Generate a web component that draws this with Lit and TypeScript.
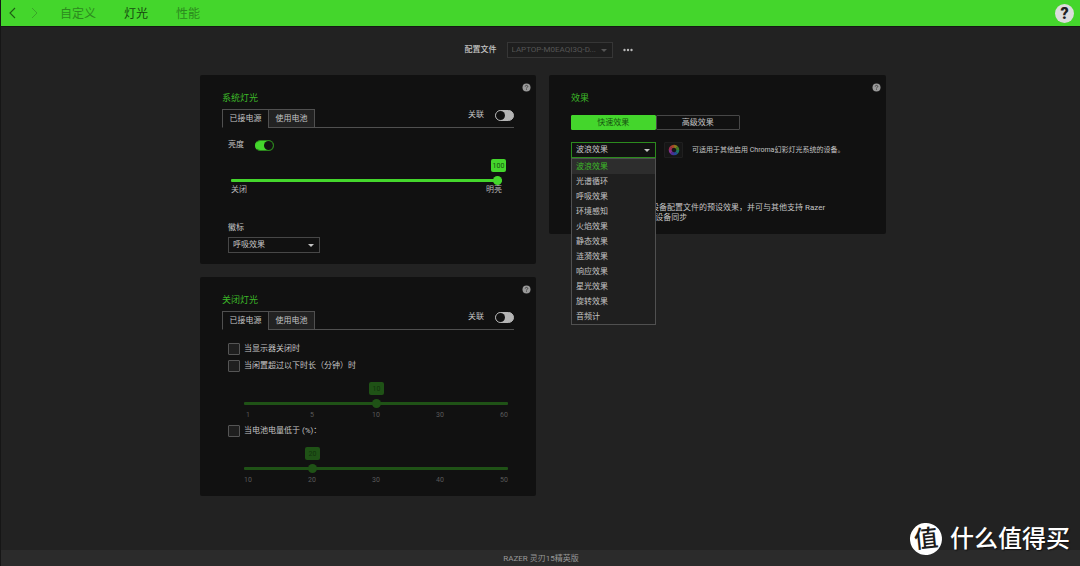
import { LitElement, html, css, svg } from "lit";
import { customElement, property, state } from "lit/decorators.js";
import { classMap } from "lit/directives/class-map.js";
import { styleMap } from "lit/directives/style-map.js";

const shared = css`
  *,
  *::before,
  *::after {
    box-sizing: border-box;
  }
  button,
  select,
  input {
    font: inherit;
    color: inherit;
    margin: 0;
    padding: 0;
    border: 0;
    border-radius: 0;
    background: none;
    letter-spacing: inherit;
  }
`;

@customElement("toggle-switch")
class ToggleSwitch extends LitElement {
  @property() label = "";
  @property({ type: Boolean }) on = false;

  static styles = [
    shared,
    css`
      :host {
        display: block;
      }
      .row {
        display: flex;
        align-items: center;
        gap: 11px;
        height: 12px;
        line-height: 12px;
      }
      .switch {
        appearance: none;
        display: flex;
        width: 19px;
        height: 11px;
        border-radius: 6px;
        background: #b5b5b5;
        border: 1px solid #b5b5b5;
      }
      .switch::before {
        content: "";
        width: 9px;
        height: 9px;
        border-radius: 50%;
        background: #111;
      }
      .switch:checked {
        background: #44d62c;
        border-color: #2b851d;
        border-left-color: #44d62c;
        justify-content: flex-end;
      }
    `,
  ];

  render() {
    return html`<label class="row">
      <span>${this.label}</span>
      <input
        class="switch"
        type="checkbox"
        role="switch"
        .checked=${this.on}
        @change=${(e: Event) => (this.on = (e.target as HTMLInputElement).checked)}
      />
    </label>`;
  }
}

@customElement("value-slider")
class ValueSlider extends LitElement {
  @property() label = "";
  @property({ type: Number }) max = 100;
  @property({ type: Number }) value = 0;
  @property({ attribute: false }) ticks: string[] = [];
  @property({ attribute: false }) ends: string[] = [];
  @property({ type: Boolean }) disabled = false;

  static styles = [
    shared,
    css`
      :host {
        display: block;
      }
      .slider {
        position: relative;
        padding-top: 17px;
        color: #44d62c;
      }
      .disabled {
        color: #1f5216;
      }
      .rail {
        position: absolute;
        top: 0;
        left: 4px;
        right: 4px;
      }
      .bubble {
        position: absolute;
        top: 0;
        width: 15px;
        margin-left: -7px;
        height: 13px;
        border-radius: 2px;
        background: currentColor;
        text-align: center;
        font-size: 7px;
        line-height: 14px;
      }
      .number {
        color: #175210;
      }
      .disabled .number {
        color: #12330d;
      }
      .range {
        appearance: none;
        display: block;
        width: 100%;
        height: 9px;
      }
      .range::-webkit-slider-runnable-track {
        height: 3px;
        border-radius: 1px;
        background: currentColor;
      }
      .range::-webkit-slider-thumb {
        appearance: none;
        width: 9px;
        height: 9px;
        margin-top: -3px;
        border-radius: 50%;
        background: currentColor;
      }
      .ends,
      .ticks {
        display: flex;
        justify-content: space-between;
        height: 9px;
        line-height: 9px;
        color: #b8b8b8;
      }
      .ticks {
        margin-top: 3px;
        font-size: 7px;
        color: #5a5a5a;
      }
      .tick {
        width: 8px;
        text-align: center;
      }
    `,
  ];

  render() {
    const shown = this.ticks.length ? this.ticks[this.value] : String(this.value);
    return html`<div class=${classMap({ slider: true, disabled: this.disabled })}>
      <div class="rail">
        <output class="bubble" style=${styleMap({ left: `${(this.value / this.max) * 100}%` })}
          ><span class="number">${shown}</span></output
        >
      </div>
      <input
        class="range"
        type="range"
        min="0"
        aria-label=${this.label}
        max=${this.max}
        .value=${String(this.value)}
        ?disabled=${this.disabled}
        @input=${(e: Event) => (this.value = Number((e.target as HTMLInputElement).value))}
      />
      ${this.ends.length
        ? html`<div class="ends">${this.ends.map((t) => html`<span>${t}</span>`)}</div>`
        : html`<div class="ticks">${this.ticks.map((t) => html`<span class="tick">${t}</span>`)}</div>`}
    </div>`;
  }
}

@customElement("power-tabs")
class PowerTabs extends LitElement {
  @state() active = 0;

  static styles = [
    shared,
    css`
      :host {
        display: block;
      }
      .bar {
        display: flex;
        height: 19px;
        margin: 0 22px;
      }
      .tab {
        width: 46px;
        padding-top: 1px;
        border: 1px solid #505050;
        border-right: 0;
        background: #222;
        color: #c4c4c4;
        white-space: nowrap;
      }
      .tab:nth-child(2) {
        width: 47px;
        border-right: 1px solid #505050;
      }
      .active {
        background: #111;
        border-bottom-color: #111;
      }
      .rest {
        flex: 1;
        display: flex;
        justify-content: flex-end;
        border-bottom: 1px solid #505050;
      }
    `,
  ];

  render() {
    return html`<div class="bar" role="tablist">
      ${["已接电源", "使用电池"].map(
        (t, i) =>
          html`<button
            role="tab"
            aria-selected=${i === this.active}
            class=${classMap({ tab: true, active: i === this.active })}
            @click=${() => (this.active = i)}
          >${t}</button>`
      )}
      <div class="rest"><toggle-switch label="关联"></toggle-switch></div>
    </div>`;
  }
}

const EFFECTS = [
  "波浪效果",
  "光谱循环",
  "呼吸效果",
  "环境感知",
  "火焰效果",
  "静态效果",
  "涟漪效果",
  "响应效果",
  "星光效果",
  "旋转效果",
  "音频计",
];

const WHEEL = ["#8a7a1e", "#3f7a28", "#1f7560", "#234a94", "#4a2f96", "#86308a", "#a02c50", "#a8452a"];

@customElement("app-root")
class AppRoot extends LitElement {
  @state() effect = 0;
  @state() mode = 0;

  static styles = [
    shared,
    css`
      :host {
        display: block;
      }
      .app {
        position: relative;
        display: flex;
        flex-direction: column;
        min-height: 100vh;
        border-left: 1px solid #161616;
        background: #222;
        color: #c4c4c4;
        font-family: Roboto, "Noto Sans CJK SC", sans-serif;
        font-size: 8px;
        line-height: 10px;
      }
      .top {
        display: flex;
        align-items: center;
        height: 27px;
        padding: 0 6px 0 8px;
        background: #44d62c;
        border-bottom: 1px solid #151a14;
      }
      .arrows {
        display: flex;
        gap: 15px;
      }
      .arrow {
        display: block;
        width: 7px;
        height: 12px;
        color: #1d5c14;
      }
      .arrow:disabled {
        color: #3aa528;
      }
      .arrow svg,
      .help svg,
      .more svg {
        display: block;
        width: 100%;
        height: 100%;
      }
      .nav {
        flex: 1;
        display: flex;
        gap: 28px;
        margin-left: 22px;
        padding-top: 2px;
        font-size: 12px;
        line-height: 24px;
      }
      .link {
        color: #2c8a1e;
        text-decoration: none;
      }
      .current {
        color: #174a10;
      }
      .about {
        width: 19px;
        height: 19px;
        border-radius: 50%;
        background: #ddd;
        color: #222;
        font-size: 16px;
        font-weight: 900;
        line-height: 19px;
      }
      .main {
        flex: 1;
        padding: 15px 0 15px 5px;
      }
      .profile {
        display: flex;
        justify-content: center;
        align-items: center;
        gap: 10px;
        margin-bottom: 17px;
        padding-left: 11px;
      }
      .profile-label {
        font-weight: 500;
      }
      .more {
        width: 10px;
        height: 8px;
      }
      .select {
        position: relative;
        height: 16px;
      }
      .select::after {
        content: "";
        position: absolute;
        right: 6px;
        top: 7px;
        border: 3px solid transparent;
        border-top-color: currentColor;
        border-bottom: 0;
        pointer-events: none;
      }
      .box {
        appearance: none;
        display: block;
        width: 100%;
        height: 16px;
        padding: 0 14px 0 4px;
        border: 1px solid #474747;
        background: #111;
        color: inherit;
        opacity: 1;
      }
      .device {
        width: 106px;
        color: #555;
      }
      .device .box {
        background: #1e1e1e;
        border-color: #363636;
      }
      .logo {
        width: 92px;
      }
      .effect {
        width: 85px;
      }
      .effect .box {
        border-color: #2c8a1e;
      }
      .columns {
        display: grid;
        grid-template-columns: 336fr 337fr;
        gap: 13px;
        align-items: start;
        max-width: 686px;
        margin: 0 auto;
      }
      .stack {
        display: grid;
        gap: 13px;
      }
      .panel {
        padding-bottom: 11px;
        border-radius: 2px;
        background: #111;
      }
      .head {
        display: flex;
        justify-content: space-between;
        align-items: flex-start;
        height: 34px;
        padding: 8px 5px 0 22px;
      }
      .head.tall {
        height: 40px;
      }
      .title {
        margin: 0;
        padding-top: 9px;
        color: #3cb828;
        font-size: 9px;
        font-weight: 400;
        line-height: 12px;
      }
      .help {
        width: 9px;
        height: 9px;
      }
      .body {
        padding: 0 28px;
      }
      .bright {
        margin: 11px 0 8px;
      }
      .brightness {
        margin: 0 6px 0 3px;
      }
      .logo-label {
        display: block;
        margin: 29px 0 4px;
      }
      .checks {
        display: grid;
        gap: 5px;
        margin-top: 13px;
      }
      .checks + .scale {
        margin-bottom: 5px;
      }
      .check {
        display: flex;
        align-items: center;
        gap: 4px;
        height: 12px;
      }
      .tick-box {
        appearance: none;
        width: 12px;
        height: 12px;
        border: 1px solid #555;
        border-radius: 1px;
        background: #1f1f1f;
      }
      .tick-box:checked {
        background: #44d62c;
      }
      .scale {
        margin: 10px 0 0 16px;
      }
      .quick {
        padding: 0 22px;
      }
      .segments {
        display: flex;
        width: 169px;
        height: 15px;
      }
      .segment {
        flex: 1;
        border: 1px solid #474747;
        border-radius: 1px;
      }
      .chosen {
        background: #44d62c;
        border-color: #44d62c;
        color: #175210;
      }
      .choice {
        display: flex;
        align-items: center;
        margin: 12px 0 45px;
      }
      .chroma {
        display: grid;
        place-items: center;
        width: 19px;
        height: 16px;
        margin: 0 9px 0 8px;
        border: 1px solid #1f1f1f;
        border-radius: 1px;
        background: #161616;
      }
      .note {
        font-size: 7px;
      }
      .menu {
        position: absolute;
        z-index: 1;
        top: 16px;
        left: 0;
        right: 0;
        margin: 0;
        padding: 0;
        list-style: none;
        border: 1px solid #505050;
        background: #1f1f1f;
        color: #c4c4c4;
      }
      .item {
        padding-left: 4px;
        line-height: 15px;
      }
      .picked {
        background: #2d2d2d;
        color: #3cb828;
      }
      .about-effect {
        max-width: 264px;
        margin: 0;
      }
      .foot {
        height: 16px;
        padding-left: 1px;
        background: #2b2b2b;
        color: #999;
        line-height: 17px;
        text-align: center;
      }
      .mark {
        position: absolute;
        right: 10px;
        bottom: 10px;
        display: flex;
        align-items: center;
        gap: 8px;
        color: #fff;
        font-size: 24px;
        font-weight: 500;
        line-height: 34px;
        text-shadow: 1px 1px 1px #111;
      }
      .seal {
        width: 32px;
        height: 32px;
        border-radius: 50%;
        background: #fff;
        color: #1c1c1c;
        line-height: 32px;
        text-align: center;
        text-shadow: none;
        transform: rotate(-6deg);
      }
    `,
  ];

  help() {
    return html`<button class="help" aria-label="帮助">
      <svg viewBox="0 0 9 9">
        <circle cx="4.5" cy="4.5" r="4" fill="#999" />
        <path d="M3.2 3.6Q3.3 2.4 4.5 2.4T5.8 3.5Q5.8 4.2 4.5 4.9V5.4M4.5 6.1V6.8" fill="none" stroke="#333" stroke-width=".8" />
      </svg>
    </button>`;
  }

  wheel() {
    return html`<svg width="12" height="12" viewBox="-6 -6 12 12">
      ${WHEEL.map(
        (c, i) =>
          svg`<path d="M0-3.8A3.8 3.8 0 0 1 2.8-2.6" fill="none" stroke=${c} stroke-width="3" transform="rotate(${i * 45})" />`
      )}
    </svg>`;
  }

  check(text: string) {
    return html`<label class="check"><input class="tick-box" type="checkbox" /><span>${text}</span></label>`;
  }

  render() {
    return html`<div class="app">
      <header class="top">
        <div class="arrows">
          <button class="arrow" aria-label="后退">
            <svg viewBox="0 0 7 12"><path d="M6 1L1 6L6 11" fill="none" stroke="currentColor" stroke-width="1.1" /></svg>
          </button>
          <button class="arrow" aria-label="前进" disabled>
            <svg viewBox="0 0 7 12"><path d="M1 1L6 6L1 11" fill="none" stroke="currentColor" stroke-width="1" /></svg>
          </button>
        </div>
        <nav class="nav">
          <a class="link" href="#custom">自定义</a>
          <a class="link current" href="#lighting" aria-current="page">灯光</a>
          <a class="link" href="#performance">性能</a>
        </nav>
        <button class="about" aria-label="帮助">?</button>
      </header>

      <main class="main">
        <div class="profile">
          <label class="profile-label" for="profile">配置文件</label>
          <div class="select device">
            <select class="box" id="profile" disabled>
              <option>LAPTOP-M0EAQI3Q-D...</option>
            </select>
          </div>
          <button class="more" aria-label="更多">
            <svg viewBox="0 0 10 8" fill="#b8b8b8">
              <circle cx="1.5" cy="4" r="1.2" /><circle cx="5" cy="4" r="1.2" /><circle cx="8.5" cy="4" r="1.2" />
            </svg>
          </button>
        </div>

        <div class="columns">
          <div class="stack">
            <section class="panel">
              <div class="head"><h2 class="title">系统灯光</h2>${this.help()}</div>
              <power-tabs></power-tabs>
              <div class="body">
                <toggle-switch class="bright" label="亮度" on></toggle-switch>
                <value-slider class="brightness" label="亮度" .value=${100} .ends=${["关闭", "明亮"]}></value-slider>
                <label class="logo-label" for="logo">徽标</label>
                <div class="select logo">
                  <select class="box" id="logo">
                    <option>呼吸效果</option>
                    <option>静态效果</option>
                  </select>
                </div>
              </div>
            </section>

            <section class="panel">
              <div class="head"><h2 class="title">关闭灯光</h2>${this.help()}</div>
              <power-tabs></power-tabs>
              <div class="body">
                <div class="checks">${this.check("当显示器关闭时")} ${this.check("当闲置超过以下时长（分钟）时")}</div>
                <value-slider
                  class="scale"
                  label="闲置时长"
                  .max=${4}
                  .value=${2}
                  .ticks=${["1", "5", "10", "30", "60"]}
                  disabled
                ></value-slider>
                ${this.check("当电池电量低于 (%)：")}
                <value-slider
                  class="scale"
                  label="电池电量"
                  .max=${4}
                  .value=${1}
                  .ticks=${["10", "20", "30", "40", "50"]}
                  disabled
                ></value-slider>
              </div>
            </section>
          </div>

          <section class="panel">
            <div class="head tall"><h2 class="title">效果</h2>${this.help()}</div>
            <div class="quick">
              <div class="segments">
                ${["快速效果", "高级效果"].map(
                  (t, i) =>
                    html`<button
                      class=${classMap({ segment: true, chosen: i === this.mode })}
                      @click=${() => (this.mode = i)}
                    >${t}</button>`
                )}
              </div>
              <div class="choice">
                <div class="select effect">
                  <select class="box" aria-label="效果" .selectedIndex=${this.effect}>
                    ${EFFECTS.map((e) => html`<option>${e}</option>`)}
                  </select>
                  <ul class="menu" role="listbox" aria-label="效果">
                    ${EFFECTS.map(
                      (e, i) =>
                        html`<li
                          role="option"
                          aria-selected=${i === this.effect}
                          class=${classMap({ item: true, picked: i === this.effect })}
                          @click=${() => (this.effect = i)}
                        >${e}</li>`
                    )}
                  </ul>
                </div>
                <button class="chroma" aria-label="Chroma">${this.wheel()}</button>
                <span class="note">可适用于其他启用 Chroma幻彩灯光系统的设备。</span>
              </div>
              <p class="about-effect">
                快速效果是可应用于您设备配置文件的预设效果，并可与其他支持 Razer Chroma幻彩灯光系统的设备同步
              </p>
            </div>
          </section>
        </div>
      </main>

      <footer class="foot">RAZER 灵刃15精英版</footer>
      <div class="mark"><span class="seal">值</span><span>什么值得买</span></div>
    </div>`;
  }
}
